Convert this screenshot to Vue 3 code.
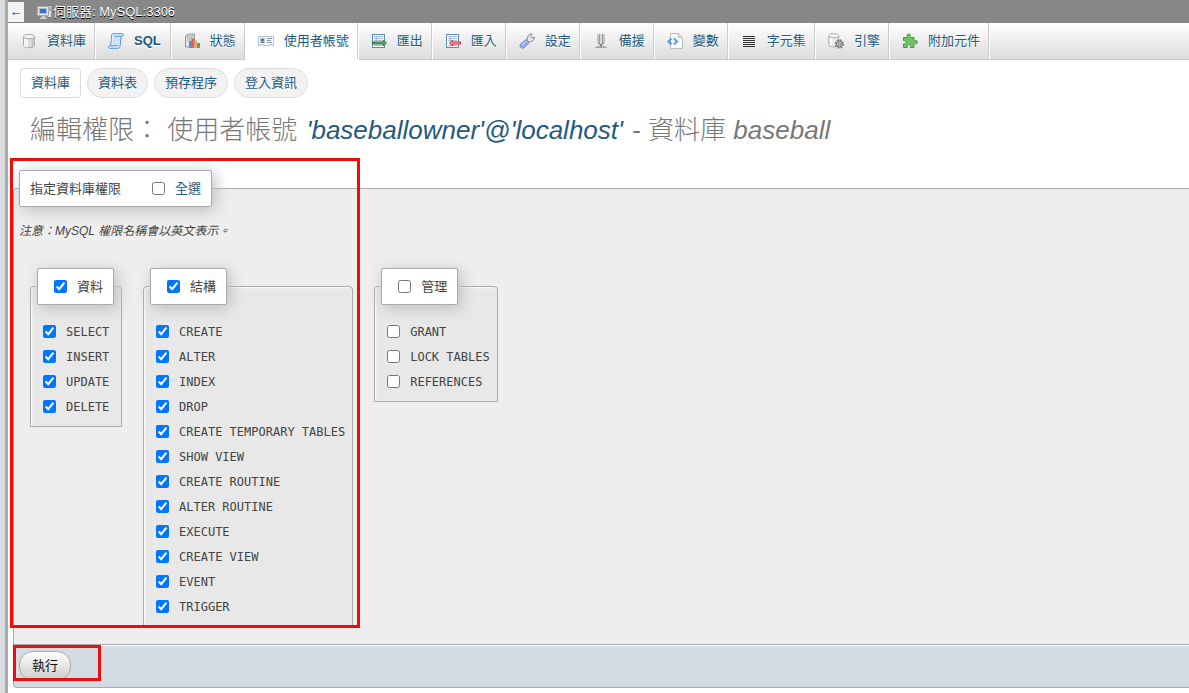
<script setup>
import { ref } from 'vue'

const tabs = [
  { icon: 'db', label: '資料庫' },
  { icon: 'sql', label: 'SQL' },
  { icon: 'status', label: '狀態' },
  { icon: 'users', label: '使用者帳號', active: true },
  { icon: 'export', label: '匯出' },
  { icon: 'import', label: '匯入' },
  { icon: 'settings', label: '設定' },
  { icon: 'replication', label: '備援' },
  { icon: 'vars', label: '變數' },
  { icon: 'charset', label: '字元集' },
  { icon: 'engine', label: '引擎' },
  { icon: 'plugin', label: '附加元件' }
]

const subtabs = ['資料庫', '資料表', '預存程序', '登入資訊']

const make = (names, on) => names.map((name) => ({ name, on }))
const checkAll = ref(false)
const groups = ref([
  { title: '資料', on: true, items: make(['SELECT', 'INSERT', 'UPDATE', 'DELETE'], true) },
  {
    title: '結構',
    on: true,
    items: make(
      ['CREATE', 'ALTER', 'INDEX', 'DROP', 'CREATE TEMPORARY TABLES', 'SHOW VIEW', 'CREATE ROUTINE',
        'ALTER ROUTINE', 'EXECUTE', 'CREATE VIEW', 'EVENT', 'TRIGGER'],
      true
    )
  },
  { title: '管理', on: false, items: make(['GRANT', 'LOCK TABLES', 'REFERENCES'], false) }
])

function setGroup(group) {
  group.items.forEach((item) => { item.on = group.on })
}
function setAll() {
  groups.value.forEach((group) => {
    group.on = checkAll.value
    setGroup(group)
  })
}
</script>

<template>
  <div class="page">
    <div class="splitter"></div>
    <div class="main">
      <header class="server">
        <button class="collapse" type="button" aria-label="隱藏面板">←</button>
        <svg class="icon" viewBox="0 0 16 16" aria-hidden="true">
          <path d="M10 1.500h5v12h-5z" fill="#d9d9d6" stroke="#777" />
          <path d="M11 4h3M11 6h3" stroke="#888" />
          <rect x=".5" y="2.500" width="11" height="9" fill="#e6e6e2" stroke="#aaa" />
          <rect x="2.500" y="4.500" width="7" height="5" fill="#3e6fb8" stroke="#9dbce8" />
          <path d="M5 12h3v1.500h2V15H3v-1.500h2z" fill="#d0d0cc" />
        </svg>
        <a href="#" class="server-name">伺服器: MySQL:3306</a>
      </header>

      <nav class="tabs">
        <a v-for="tab in tabs" :key="tab.label" href="#" class="tab" :class="{ active: tab.active, latin: tab.icon === 'sql' }">
          <svg class="icon" viewBox="0 0 16 16" fill="none" aria-hidden="true">
            <template v-if="tab.icon === 'db'">
              <path d="M2.500 4v8.500c0 1.300 2.500 2.200 5.500 2.200s5.500-.9 5.500-2.200V4z" fill="#dcdcdc" stroke="#aaa" />
              <path d="M4 5v8.500M6 6v8.400" stroke="#fff" stroke-width="1.300" />
              <path d="M11.500 6v8" stroke="#bbb" stroke-width="1.500" />
              <ellipse cx="8" cy="3.500" rx="5.500" ry="2.200" fill="#f4f4f4" stroke="#aaa" />
            </template>
            <template v-else-if="tab.icon === 'sql'">
              <path d="M4.500.700h10c1.300 0 1.300 2.600 0 2.600h-1.300L12 13.500c-.2 1.200-.8 1.800-1.700 1.800H1.500c-1.300 0-1.300-2.600 0-2.600h1.200L3.500 3c.1-1.300.3-2.300 1-2.300z" fill="#dceafc" stroke="#5c96d3" />
              <path d="M3 12.700h7.500M13 3.300H6" stroke="#5c96d3" />
              <path d="M5.500 5h6M5.200 7h6M5 9h6M4.800 11h6" stroke="#c2daf6" />
            </template>
            <template v-else-if="tab.icon === 'status'">
              <path d="M1.500 3 4 1h6.500v11L8 14H1.500z" fill="#e4e4e4" stroke="#999" />
              <path d="M1.500 3H8v11M8 3l2.500-2M3 5h4M3 7h4" stroke="#aaa" />
              <rect x="5" y="8" width="3" height="7" fill="#5b8ed8" />
              <rect x="7.500" y="5.500" width="3" height="9.500" fill="#e06060" />
              <rect x="10.500" y="7.500" width="2.500" height="7.500" fill="#f0a860" />
              <rect x="13" y="10" width="3" height="5" fill="#54aa48" />
            </template>
            <template v-else-if="tab.icon === 'users'">
              <path d="M.5 3.500h15v9h-2v-1h-2v1h-7v-1h-2v1h-2z" fill="#f4f7fa" stroke="#b9c3d0" />
              <rect x="2" y="5" width="5" height="5" fill="#b8c8da" />
              <path d="M3 10c0-2 3-2 3 0z" fill="#566f8d" />
              <circle cx="4.500" cy="7" r="1.300" fill="#6b5146" />
              <path d="M9 5.500h5M9 7.500h4M9 9.500h5" stroke="#8299b5" />
            </template>
            <template v-else-if="tab.icon === 'export' || tab.icon === 'import'">
              <rect x="1.500" y="1.500" width="12" height="13" fill="#f7faff" stroke="#5e8bc5" />
              <path d="M3 3.500h9M3 5.500h9M3 7.500h9M3 12.500h9M5.500 3v10" stroke="#a6bddb" />
              <path v-if="tab.icon === 'export'" d="M1.500 9h11V7.500l3 2.500-3 2.500V11h-11z" fill="#6fb95d" stroke="#28702a" />
              <path v-else d="M15.500 9H7.500V7.500l-3 2.500 3 2.500V11h8z" fill="#f8b5b5" stroke="#db2626" />
            </template>
            <template v-else-if="tab.icon === 'settings'">
              <path d="M8 7.500 9 3c1-1.800 3-2.500 4.500-1.800L11.500 3.500l1 1.500L15.500 4c.3 2.300-1.500 4.300-4 4.500L9.500 9z" fill="#e8e8e8" stroke="#888" />
              <path d="M7 6.500 10.300 9.500 5.500 14.500c-2.800 2-5.700-.8-4-3.500z" fill="#8fb2ee" stroke="#6c90d8" />
              <path d="m3 12 4-3.500" stroke="#cfdffb" />
            </template>
            <template v-else-if="tab.icon === 'replication'">
              <path d="M5 1v9M6.500 1v10M9.500 1v10M11 1v9" stroke="#999" />
              <path d="M8 1v12" stroke="#d7d7d7" stroke-width="2" />
              <path d="M5 10c1 2 5 2 6 0" stroke="#777" />
              <path d="M2 14.500h12M4 13.500h8" stroke="#aaa" />
              <circle cx="8" cy="13" r="1" fill="#777" />
            </template>
            <template v-else-if="tab.icon === 'vars'">
              <path d="M3.500.5h8l4 4v11h-12z" fill="#fafafa" stroke="#bbb" />
              <path d="M11.500.5v4h4" fill="#e4e4e4" stroke="#bbb" />
              <path d="M4.500 5.500 1.500 8.500l3 3M7 5.500l3 3-3 3" stroke="#5b9bd8" stroke-width="2" />
            </template>
            <template v-else-if="tab.icon === 'charset'">
              <path d="M2 3.500h12M2 5.500h12M2 7.500h12M2 9.500h12M2 11.500h12M2 13.500h12" stroke="#333" />
            </template>
            <template v-else-if="tab.icon === 'engine'">
              <path d="M.8 3v9c0 1.200 2 2 5 2s5-.8 5-2V3z" fill="#ebebeb" stroke="#aaa" />
              <path d="M3 5v8" stroke="#fff" stroke-width="2" />
              <ellipse cx="5.800" cy="2.700" rx="5" ry="2" fill="#fafafa" stroke="#aaa" />
              <circle cx="11.300" cy="11" r="3.800" stroke="#777" stroke-width="1.800" stroke-dasharray="1.600 1.380" />
              <circle cx="11.300" cy="11" r="3" fill="#c9c9c9" stroke="#777" />
              <circle cx="11.300" cy="11" r="1.200" fill="#f5f5f5" stroke="#777" />
            </template>
            <template v-else>
              <path d="M1.500 4.500H5C5.800 4 4.800 3 5 2c.5-1.500 3-1.500 3.300 0 .2 1-.8 2 0 2.500H12v3c.5.8 1.500-.2 2.500 0 1.300.5 1.300 2.700 0 3.200-1 .2-2-.8-2.500 0v3.800H8.500c-.6-.7.200-1.700-.3-2.500-.7-.8-2.200-.8-2.700 0-.4.8.4 1.800-.2 2.500H1.500V11c.6-.7 1.600.2 2.300-.4.700-.7.700-2 0-2.600-.7-.5-1.700.3-2.300-.4z" fill="#6fc464" stroke="#469b43" />
            </template>
          </svg>
          <span>{{ tab.label }}</span>
        </a>
      </nav>

      <nav class="subtabs">
        <a v-for="(name, i) in subtabs" :key="name" href="#" class="subtab" :class="{ current: i === 0 }">{{ name }}</a>
      </nav>

      <h2>編輯權限： 使用者帳號 <a href="#"><i>'baseballowner'@'localhost'</i></a> - 資料庫 <i>baseball</i></h2>

      <form @submit.prevent>
        <fieldset class="outer">
          <legend class="all">
            <span>指定資料庫權限</span>
            <label class="check link"><input v-model="checkAll" type="checkbox" @change="setAll">全選</label>
          </legend>
          <p class="note">注意：MySQL 權限名稱會以英文表示。</p>
          <div class="groups">
            <fieldset v-for="group in groups" :key="group.title" class="group">
              <legend>
                <label class="check"><input v-model="group.on" type="checkbox" @change="setGroup(group)">{{ group.title }}</label>
              </legend>
              <label v-for="item in group.items" :key="item.name" class="check item">
                <input v-model="item.on" type="checkbox"><code>{{ item.name }}</code>
              </label>
            </fieldset>
          </div>
        </fieldset>
        <div class="footer">
          <button class="go" type="submit">執行</button>
          <div class="mark mark-go"></div>
        </div>
        <div class="mark mark-rights"></div>
      </form>
    </div>
  </div>
</template>

<style>
body {
  margin: 0;
  background: #fff;
}
</style>

<style scoped>
.page {
  display: flex;
  min-height: 100vh;
  font: 13px/20px "Liberation Sans", "Noto Sans CJK TC", sans-serif;
  color: #444;
}
.page * {
  box-sizing: border-box;
}
a {
  color: #235a81;
  text-decoration: none;
}
.splitter {
  flex: none;
  width: 8px;
  background: #d8dcdf;
  border-right: 3px solid #aaa;
}
.main {
  flex: 1;
  min-width: 0;
}
.icon {
  flex: none;
  width: 16px;
  height: 16px;
}
.server {
  display: flex;
  align-items: center;
  height: 23px;
  background: #888;
}
.collapse {
  width: 16px;
  height: 20px;
  margin: 0 13px 0 0;
  padding: 0;
  border: 0;
  background: #f3f3f3;
  color: #333;
  font: 13px/20px "Liberation Sans", sans-serif;
}
.server-name {
  color: #fff;
  text-shadow: 0 1px 0 #000;
}
.tabs {
  display: flex;
  height: 37px;
  padding-left: 1px;
  background: linear-gradient(#fff, #dcdcdc);
  border-bottom: 1px solid #ccc;
}
.tab {
  display: flex;
  align-items: center;
  gap: 10px;
  height: 37px;
  padding: 0 9px 0 12px;
  border-right: 1px solid #fff;
  border-bottom: 1px solid #ccc;
  box-shadow: inset -1px 0 0 #ccc;
  white-space: nowrap;
  text-shadow: 0 1px 0 #fff;
}
.tab.latin {
  padding-right: 10px;
  font-weight: bold;
}
.tab.active {
  background: #fff;
  border-bottom-color: #fff;
}
.subtabs {
  display: flex;
  gap: 6px;
  padding: 8px 12px 0;
}
.subtab {
  padding: 4px 10px;
  border: 1px solid #ddd;
  border-radius: 20px;
  background: #f2f2f2;
  line-height: 20px;
  white-space: nowrap;
}
.subtab.current {
  border-radius: 3px;
  background: #fff;
}
h2 {
  margin: 12px 0 0 22px;
  color: #777;
  font-size: 26px;
  line-height: 40px;
  font-weight: 300;
  white-space: nowrap;
}
h2 a {
  margin: 0 2px;
}
form {
  position: relative;
  margin: 20px 0 0 5px;
}
fieldset {
  min-width: 0;
  margin: 0;
  border: 1px solid #aaa;
  border-radius: 4px 4px 0 0;
}
legend {
  display: flex;
  align-items: center;
  height: 37px;
  padding: 0 10px;
  border: 1px solid #aaa;
  border-radius: 2px;
  background: #fff;
  box-shadow: 3px 3px 15px #bbb;
}
.outer {
  padding: 0 5px 17px;
  border-right: 0;
  border-bottom: 0;
  border-radius: 4px 0 0 0;
  background: #eee;
}
.all {
  gap: 31px;
}
.check {
  display: flex;
  align-items: center;
  gap: 10px;
}
.check input {
  flex: none;
  width: 13px;
  height: 13px;
  margin: 0;
}
.link {
  color: #235a81;
}
.note {
  margin: 14px 0 27px;
  font-size: 12px;
  font-style: italic;
}
.groups {
  display: flex;
  align-items: flex-start;
  gap: 21px;
  padding-left: 11px;
}
.group {
  padding: 14px 7px 7px 12px;
  background: #e8e8e8;
  box-shadow: inset 1px 1px 2px #fff;
}
.group legend {
  margin-left: -6px;
  padding-left: 16px;
}
.item {
  height: 25px;
  white-space: nowrap;
}
.item code {
  font: 12px/20px "DejaVu Sans Mono", monospace;
}
.footer {
  position: relative;
  padding: 6px 5px;
  border: 1px solid #aaa;
  border-right: 0;
  border-radius: 0 0 0 4px;
  background: #d3dce3;
  box-shadow: inset 0 1px 0 #fff;
}
.go {
  display: block;
  height: 30px;
  padding: 0 12px;
  border: 1px solid #aaa;
  border-radius: 14px;
  background: linear-gradient(#fff, #ccc);
  color: #111;
  font: inherit;
}
.mark {
  position: absolute;
  border: 3px solid #ee0c0c;
  pointer-events: none;
}
.mark-go {
  top: 0;
  left: -1px;
  width: 88px;
  height: 36px;
}
.mark-rights {
  top: -12px;
  left: -3px;
  width: 350px;
  height: 470px;
}
</style>
